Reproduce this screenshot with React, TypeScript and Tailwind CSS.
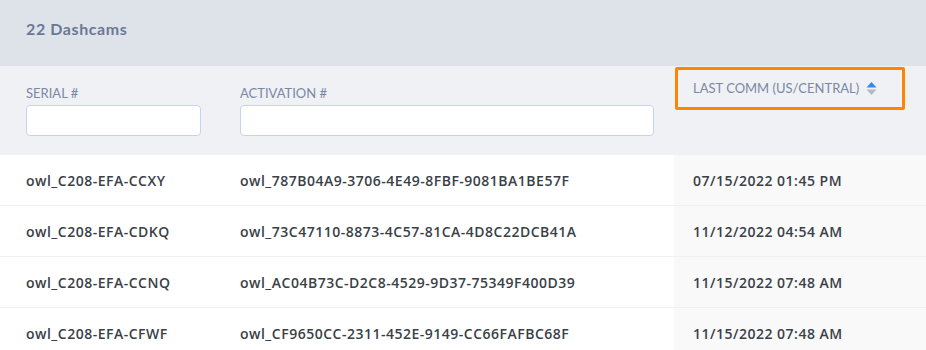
const rows = [
  { serial: "owl_C208-EFA-CCXY", activation: "owl_787B04A9-3706-4E49-8FBF-9081BA1BE57F", last: "07/15/2022 01:45 PM" },
  { serial: "owl_C208-EFA-CDKQ", activation: "owl_73C47110-8873-4C57-81CA-4D8C22DCB41A", last: "11/12/2022 04:54 AM" },
  { serial: "owl_C208-EFA-CCNQ", activation: "owl_AC04B73C-D2C8-4529-9D37-75349F400D39", last: "11/15/2022 07:48 AM" },
  { serial: "owl_C208-EFA-CFWF", activation: "owl_CF9650CC-2311-452E-9149-CC66FAFBC68F", last: "11/15/2022 07:48 AM" },
];

const SortIcon = () => (
  <svg width="11" height="17" viewBox="0 0 11 17" className="ml-[7px]">
    <path d="M5.5 2 L10.5 7.5 L0.5 7.5 Z" fill="#2d8cf0" />
    <path d="M5.5 15 L10.5 9.5 L0.5 9.5 Z" fill="#b4b9c3" />
  </svg>
);

export default function App() {
  return (
    <div className="w-[926px] h-[350px] overflow-hidden bg-white font-['Open_Sans',sans-serif]">
      <div className="h-[66px] bg-[#dee3ea] pl-[26px] pt-[18px]">
        <h1 className="text-[16px] leading-[22px] font-bold text-[#6a7894] font-['Lato',sans-serif] tracking-[0.6px]">22 Dashcams</h1>
      </div>

      <div className="flex h-[89px] bg-[#eff1f5]">
        <div className="w-[214px] pl-[26px] pr-[13px] pt-[19px]">
          <div className="text-[13px] text-[#7b88a3] leading-[17px] mb-[3px] font-['Lato',sans-serif]">SERIAL #</div>
          <input className="w-full h-[31px] bg-white border border-[#c8d2ec] rounded-[4px]" />
        </div>
        <div className="w-[460px] pl-[26px] pr-[20px] pt-[19px]">
          <div className="text-[13px] text-[#7b88a3] leading-[17px] mb-[3px] font-['Lato',sans-serif]">ACTIVATION #</div>
          <input className="w-full h-[31px] bg-white border border-[#c8d2ec] rounded-[4px]" />
        </div>
        <div className="flex-1 pt-px pl-px">
          <div className="w-[230px] h-[43px] border-[3px] border-[#ff8500] rounded-[2px] flex items-center pl-[15px]">
            <span className="text-[13px] text-[#7b88a3] font-['Lato',sans-serif]">LAST COMM (US/CENTRAL)</span>
            <SortIcon />
          </div>
        </div>
      </div>

      {rows.map((r) => (
        <div key={r.serial} className="flex h-[51px] border-b border-[#f0f1f4] text-[14px] tracking-[0.5px] font-semibold text-[#3a3f48]">
          <div className="w-[214px] pl-[26px] flex items-center">{r.serial}</div>
          <div className="w-[460px] pl-[26px] flex items-center">{r.activation}</div>
          <div className="flex-1 pl-[19px] flex items-center bg-[#f9f9fa]">{r.last}</div>
        </div>
      ))}
    </div>
  );
}
